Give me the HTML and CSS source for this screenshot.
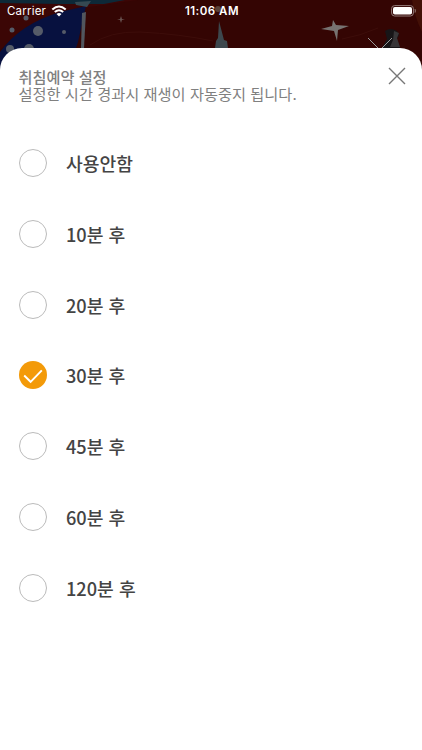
FILE: index.html
```html
<!DOCTYPE html>
<html lang="ko">
<head>
    <meta charset="utf-8">
    <title>취침예약 설정</title>
    <link rel="stylesheet" href="styles.css">
</head>
<body>
    <svg class="backdrop" width="422" height="75" viewBox="0 0 422 75">
        <rect width="422" height="75" fill="#340503"/>
        <path d="M0 0H138L90 7L60 13Q23 26 0 50Z" fill="#3b0605"/>
        <path d="M0 0H125L104 4L58 4L0 3Z" fill="#0d2938"/>
        <path d="M0 52Q20 24 60 12L86 6L78 42L76 48V75H0Z" fill="#07113f"/>
        <path d="M75 2L91 1L87 7L76 5Z" fill="#354952"/>
        <path d="M82 13L86 12L84 48H81Z" fill="#51565e"/>
        <g fill="#555b68">
            <circle cx="38" cy="31" r="5"/>
            <circle cx="12" cy="30" r="2.5"/>
            <circle cx="26" cy="18" r="2.5"/>
            <circle cx="64" cy="32" r="2"/>
            <circle cx="10" cy="49" r="4"/>
            <circle cx="29" cy="49" r="5"/>
        </g>
        <path d="M121 16L122 19L125 20L122 20L121 23L120 20L117 20L120 19Z" fill="#68524f"/>
        <path d="M90 45Q110 31 140 32Q180 34 213 41M342 39Q360 36 378 28" fill="none" stroke="#3d0d0a"/>
        <path d="M219 21L224 40L227 41L228 48H215L216 41L218 38Z" fill="#3d484e"/>
        <circle cx="218" cy="9" r="3" fill="#594139"/>
        <path d="M333 20L336 25L349 26L338 30L337 41L334 31L321 29L332 26Z" fill="#777371"/>
        <path d="M412 0H422V32Q414 15 412 0Z" fill="#431007"/>
        <path d="M385 31Q390 27 397 31L399 35L397 39L400 48H382L387 39Z" fill="#171517"/>
        <path d="M394 31L399 33L397 38L400 47H390L393 40Z" fill="#383638"/>
        <path d="M368 38L380 50L392 38" fill="none" stroke="#999"/>
    </svg>

    <div class="page">
        <div class="status">
            <div class="carrier">
                <span>Carrier</span>
                <svg width="16" height="12" viewBox="0 0 16 12">
                    <path d="M1.3 4.6Q8 -1.5 14.7 4.6M3.8 7.1Q8 3.4 12.2 7.1" fill="none" stroke="#fff" stroke-width="2"/>
                    <path d="M5.5 8.9Q8 6.9 10.5 8.9L8 11.4Z" fill="#fff"/>
                </svg>
            </div>
            <div class="time">11:06 AM</div>
            <svg class="battery" width="26" height="12" viewBox="0 0 26 12">
                <rect x="0.6" y="0.6" width="21.8" height="10.4" rx="3" fill="none" stroke="#947d7b"/>
                <rect x="2" y="2" width="19" height="7.6" rx="1.8" fill="#fff"/>
                <path d="M24 4Q25.2 5.8 24 7.6Z" fill="#947d7b" stroke="#947d7b" stroke-width="0.5"/>
            </svg>
        </div>

        <div class="sheet">
            <div class="header">
                <div>
                    <div class="title">취침예약 설정</div>
                    <div class="description">설정한 시간 경과시 재생이 자동중지 됩니다.</div>
                </div>
                <svg class="close" width="18" height="18" viewBox="0 0 18 18">
                    <path d="M1 1L17 17M17 1L1 17" stroke="#777" stroke-width="1.4"/>
                </svg>
            </div>

            <div class="options">
                <div class="option"><span class="radio"></span>사용안함</div>
                <div class="option"><span class="radio"></span>10분 후</div>
                <div class="option"><span class="radio"></span>20분 후</div>
                <div class="option">
                    <span class="radio checked">
                        <svg width="28" height="28" viewBox="0 0 28 28">
                            <path d="M5.2 14.5L11.6 20.8L22.8 9.3" fill="none" stroke="#fff" stroke-width="1.9"/>
                        </svg>
                    </span>30분 후
                </div>
                <div class="option"><span class="radio"></span>45분 후</div>
                <div class="option"><span class="radio"></span>60분 후</div>
                <div class="option"><span class="radio"></span>120분 후</div>
            </div>
        </div>
    </div>
</body>
</html>
```
FILE: styles.css
```css
* {
    box-sizing: border-box;
}

body {
    margin: 0;
    height: 750px;
    overflow: hidden;
    background: #340503;
    font-family: "Noto Sans CJK KR", sans-serif;
}

svg {
    display: block;
}

.backdrop {
    position: absolute;
    top: 0;
    left: 0;
}

.page {
    position: relative;
    display: flex;
    flex-direction: column;
    height: 750px;
}

.status {
    display: grid;
    grid-template-columns: 1fr auto 1fr;
    align-items: center;
    height: 47.5px;
    padding: 0 5px 26px 7px;
    color: #fff;
    font-family: Inter, sans-serif;
    font-size: 11.5px;
    line-height: 14px;
}

.carrier {
    display: flex;
    align-items: center;
    gap: 5px;
    letter-spacing: 0.2px;
}

.time {
    font-weight: 600;
    letter-spacing: 0.5px;
}

.battery {
    justify-self: end;
}

.sheet {
    flex: 1;
    padding: 20px 16px 0 18.5px;
    background: #fff;
    border-radius: 22px 22px 0 0;
}

.header {
    display: flex;
    justify-content: space-between;
    color: #808080;
    font-size: 15.25px;
    line-height: 17px;
}

.title {
    font-size: 15.2px;
    font-weight: 500;
}

.close {
    margin-top: -0.5px;
}

.options {
    padding-top: 26.2px;
}

.option {
    display: flex;
    align-items: center;
    gap: 19.5px;
    height: 70.8px;
    color: #444;
    font-size: 18.2px;
    font-weight: 500;
}

.radio {
    width: 28px;
    height: 28px;
    border: 1px solid #bbb;
    border-radius: 50%;
}

.checked {
    border: 0;
    background: #f39a09;
}
```
